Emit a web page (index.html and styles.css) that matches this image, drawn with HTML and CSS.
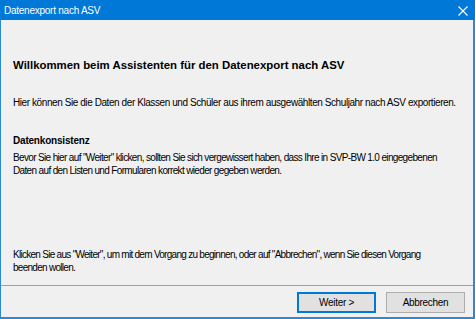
FILE: index.html
```html
<!DOCTYPE html>
<html>
<head>
    <title>Datenexport nach ASV</title>
    <link rel="stylesheet" href="styles.css">
</head>
<body>

    <div class="window">
        <div class="titlebar">
            <span class="title">Datenexport nach ASV</span>
            <svg class="close" width="10" height="10" viewBox="0 0 10 10">
                <path d="M0.5 0.5 L9.5 9.5 M9.5 0.5 L0.5 9.5" stroke="#fff" stroke-width="1.1" fill="none"/>
            </svg>
        </div>

        <div class="content">
            <h1>Willkommen beim Assistenten für den Datenexport nach ASV</h1>
            <p class="intro">Hier können Sie die Daten der Klassen und Schüler aus ihrem ausgewählten Schuljahr nach ASV exportieren.</p>

            <h2>Datenkonsistenz</h2>
            <p class="check">Bevor Sie hier auf "Weiter" klicken, sollten Sie sich vergewissert haben, dass Ihre in SVP-BW 1.0 eingegebenen<br>Daten auf den Listen und Formularen korrekt wieder gegeben werden.</p>

            <!-- Hinweis unten -->
            <p class="hint">Klicken Sie aus "Weiter", um mit dem Vorgang zu beginnen, oder auf "Abbrechen", wenn Sie diesen Vorgang<br>beenden wollen.</p>
        </div>

        <div class="footer">
            <button class="btn default">Weiter &gt;</button>
            <button class="btn">Abbrechen</button>
        </div>
    </div>

</body>
</html>
```

FILE: styles.css
```css
/* Wizard dialog */
body {
    margin: 0;
    padding: 0;
    background-color: #f0f0f0;
    font-family: "Liberation Sans", Arial, sans-serif;
}

.window {
    width: 475px;
    height: 319px;
    box-sizing: border-box;
    border-left: 1px solid #2b8ad8;
    border-right: 2px solid #2b8ad8;
    border-bottom: 2px solid #2b8ad8;
    background-color: #f0f0f0;
    display: flex;
    flex-direction: column;
}

.titlebar {
    height: 20px;
    background-color: #0078d7;
    color: #fff;
    display: flex;
    align-items: center;
    margin-left: -1px;
    margin-right: -2px;
    padding-left: 4px;
}

.title {
    font-family: "Liberation Sans", Arial, sans-serif;
    font-size: 10px;
    letter-spacing: -0.25px;
    flex: 1;
}

.close {
    margin-right: 7px;
    margin-top: 1px;
}

.content {
    flex: 1;
    display: flex;
    flex-direction: column;
    padding: 37px 12px 11px 12px;
    color: #000;
    white-space: nowrap;
}

h1 {
    font-size: 11.4px;
    line-height: 16px;
    font-weight: bold;
    margin: 0 0 23px 0;
}

p {
    font-size: 10px;
    letter-spacing: -0.5px;
    line-height: 13px;
    margin: 0;
}

.intro {
    margin-bottom: 25px;
    letter-spacing: -0.42px;
}

.check {
    letter-spacing: -0.65px;
}

h2 {
    font-size: 10px;
    letter-spacing: -0.2px;
    line-height: 13px;
    font-weight: bold;
    margin: 0 0 4px 0;
}

.hint {
    margin-top: auto;
    letter-spacing: -0.72px;
}

.footer {
    height: 32px;
    box-sizing: border-box;
    border-top: 1px solid #a0a0a0;
    display: flex;
    justify-content: flex-end;
    gap: 10px;
    padding: 6px 8px 0 0;
}

.btn {
    width: 79px;
    height: 21px;
    box-sizing: border-box;
    background-color: #e1e1e1;
    border: 1px solid #adadad;
    font-family: "Liberation Sans", Arial, sans-serif;
    font-size: 10px;
    letter-spacing: -0.3px;
    color: #000;
    padding: 0;
}

.btn.default {
    border: 2px solid #0078d7;
}
```
